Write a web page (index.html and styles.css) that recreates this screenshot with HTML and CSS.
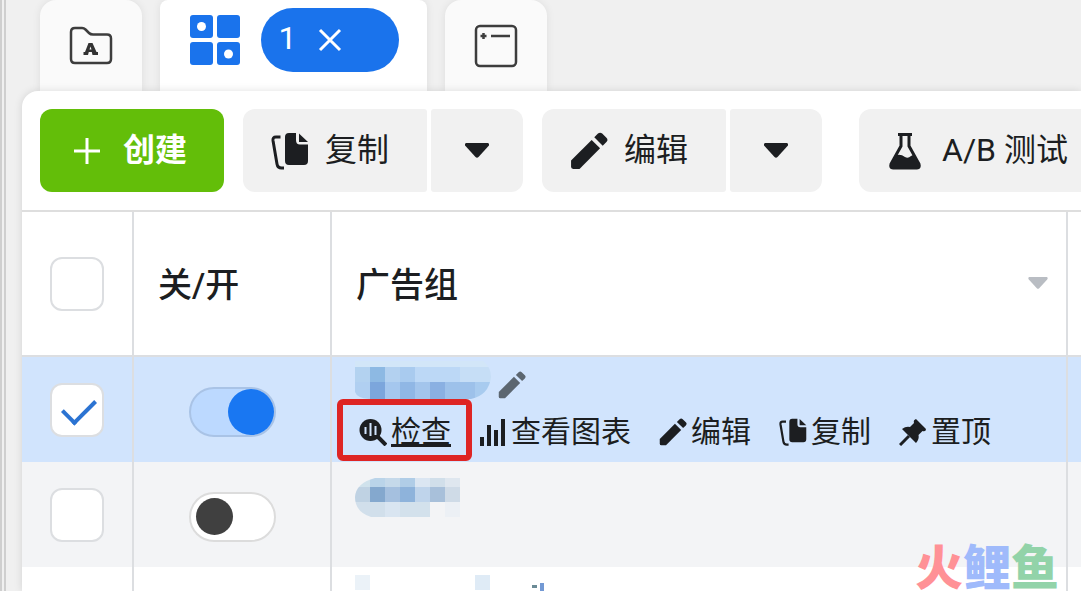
FILE: index.html
```html
<!DOCTYPE html>
<html lang="zh-CN">
<head>
    <meta charset="utf-8">
    <meta name="viewport" content="width=device-width, initial-scale=1">
    <title>广告组</title>
    <link rel="stylesheet" href="styles.css">
</head>
<body>
    <!-- shared icons -->
    <svg class="sprite" aria-hidden="true">
        <symbol id="i-copy" viewBox="0 0 38 38">
            <path d="M9.500 5 H5 Q1.500 5 2 8.500 L6 32 Q6.700 36 10.500 36 H13" fill="none" stroke="currentColor" stroke-width="3"/>
            <path d="M18 1 H25 V8 Q25 12.500 29 12.500 H37 V29 Q37 33 33 33 H18 Q14 33 14 29 V5 Q14 1 18 1 Z" fill="currentColor"/>
            <path d="M28 1.500 L37 10 H28 Z" fill="currentColor"/>
        </symbol>
        <symbol id="i-pencil" viewBox="0 0 36 36">
            <path d="M1 27 L20.500 7.500 L28.500 15.500 L9 35 H3 Q1 35 1 33 Z" fill="currentColor"/>
            <path d="M23 5 L26.500 1.500 Q28.500 0 30.500 1.500 L34.500 5.500 Q36.500 7.500 34.500 9.500 L31 13 Z" fill="currentColor"/>
        </symbol>
        <symbol id="i-caret" viewBox="0 0 24 15">
            <path d="M1 0 H23 Q25 1 23.500 3 L13.500 14 Q12 15.500 10.500 14 L.5 3 Q-1 1 1 0 Z" fill="currentColor"/>
        </symbol>
    </svg>

    <div class="app">
        <nav class="tabs">
            <button class="tab" type="button" aria-label="广告系列">
                <svg width="44" height="40" viewBox="0 0 44 40" fill="none">
                    <path d="M6 2 H13 Q15 2 16.500 3.500 L20 7 Q21.500 8.500 24 8.500 H38 Q42 8.500 42 12.500 V33 Q42 37 38 37 H6 Q2 37 2 33 V6 Q2 2 6 2 Z" stroke="#3d3d3d" stroke-width="2.500"/>
                    <path d="M19.500 17 H23.500 L27.500 26 H29 V29 H23.500 L22.800 26 H19.800 L19 29 H14.500 V26 H16 Z M20.500 23.500 H22.500 L21.500 20.500 Z" fill="#333" fill-rule="evenodd"/>
                </svg>
            </button>
            <div class="tab tab-active">
                <svg width="52" height="52" viewBox="0 0 52 52" fill="#1a73ec">
                    <rect x="1" y="1" width="23" height="23" rx="3"/>
                    <rect x="28" y="1" width="23" height="23" rx="3"/>
                    <rect x="1" y="28" width="23" height="23" rx="3"/>
                    <rect x="28" y="28" width="23" height="23" rx="3"/>
                    <circle cx="12.500" cy="12.500" r="4.500" fill="#fff"/>
                    <circle cx="39.500" cy="40" r="4.500" fill="#fff"/>
                </svg>
                <div class="chip">
                    <span class="count">1</span>
                    <button class="chip-close" type="button" aria-label="清除">
                        <svg width="24" height="24" viewBox="0 0 24 24"><path d="M2 2 L22 22 M22 2 L2 22" stroke="#fff" stroke-width="3"/></svg>
                    </button>
                </div>
            </div>
            <button class="tab" type="button" aria-label="广告">
                <svg width="44" height="44" viewBox="0 0 44 44" fill="none" stroke="#3d3d3d" stroke-width="2.500">
                    <rect x="2" y="2" width="40" height="40" rx="4"/>
                    <path d="M17 12 H36 M6.500 12 H12.500 M9.500 9 V15"/>
                </svg>
            </button>
        </nav>

        <main class="panel">
            <div class="toolbar">
                <button class="btn btn-create" type="button">
                    <svg width="28" height="28" viewBox="0 0 28 28"><path d="M14 1 V27 M1 14 H27" stroke="#fff" stroke-width="3"/></svg>
                    <span>创建</span>
                </button>
                <div class="split">
                    <button class="btn btn-main" type="button"><svg width="38" height="38"><use href="#i-copy"/></svg><span>复制</span></button>
                    <button class="btn btn-more" type="button" aria-label="更多复制选项"><svg width="24" height="15"><use href="#i-caret"/></svg></button>
                </div>
                <div class="split">
                    <button class="btn btn-main" type="button"><svg width="38" height="38"><use href="#i-pencil"/></svg><span>编辑</span></button>
                    <button class="btn btn-more" type="button" aria-label="更多编辑选项"><svg width="24" height="15"><use href="#i-caret"/></svg></button>
                </div>
                <button class="btn btn-test" type="button">
                    <svg width="34" height="38" viewBox="0 0 34 38">
                        <path d="M10 2.500 H24 M13 3 V14 L3 32 Q2 36 5 36 H29 Q32 36 31 32 L21 14 V3" fill="none" stroke="#1c1e21" stroke-width="3"/>
                        <path d="M9 23 Q13 22 17 25 Q20 27 23 24 L25 23 L32 32 Q33 37 29 37 H5 Q1 37 2 32 Z" fill="#1c1e21"/>
                    </svg>
                    <span>A/B 测试</span>
                </button>
            </div>

            <table class="grid">
                <colgroup>
                    <col class="col-check">
                    <col class="col-switch">
                    <col>
                    <col class="col-rest">
                </colgroup>
                <thead>
                    <tr>
                        <th class="center"><input class="check" type="checkbox" aria-label="全选"></th>
                        <th>关/开</th>
                        <th>
                            <div class="head-name">
                                广告组
                                <svg width="20" height="12"><use href="#i-caret"/></svg>
                            </div>
                        </th>
                        <th></th>
                    </tr>
                </thead>
                <tbody>
                    <tr class="selected">
                        <td class="center"><input class="check" type="checkbox" aria-label="选择广告组" checked></td>
                        <td class="center"><input class="switch" type="checkbox" role="switch" aria-label="投放开关" checked></td>
                        <td class="name-cell">
                            <div class="name">
                                <svg width="136" height="38" viewBox="0 0 136 38">
                                    <clipPath id="m1"><path d="M0 0 H128 Q136 6 136 16 Q134 34 116 38 H14 Q2 37 0 31 Z"/></clipPath>
                                    <g clip-path="url(#m1)">
                                        <rect width="136" height="6" fill="#d2e6f8"/>
                                        <rect y="6" width="15" height="15" fill="#b3d2f0"/>
                                        <rect x="15" y="6" width="15" height="15" fill="#8db9e3"/>
                                        <rect x="30" y="6" width="15" height="15" fill="#b3d1f0"/>
                                        <rect x="45" y="6" width="15" height="15" fill="#a9cbef"/>
                                        <rect x="60" y="6" width="45" height="15" fill="#bcd8f6"/>
                                        <rect x="105" y="6" width="31" height="15" fill="#c6def6"/>
                                        <rect y="21" width="15" height="17" fill="#b0cff1"/>
                                        <rect x="15" y="21" width="15" height="17" fill="#7ca6dc"/>
                                        <rect x="30" y="21" width="15" height="17" fill="#a5c7ee"/>
                                        <rect x="45" y="21" width="15" height="17" fill="#90b7e5"/>
                                        <rect x="60" y="21" width="15" height="17" fill="#a3c5ec"/>
                                        <rect x="75" y="21" width="15" height="17" fill="#8ab0e2"/>
                                        <rect x="90" y="21" width="30" height="17" fill="#9dc1ea"/>
                                        <rect x="120" y="21" width="16" height="17" fill="#a8cbef"/>
                                    </g>
                                </svg>
                                <button class="rename" type="button" aria-label="重命名"><svg width="28" height="28"><use href="#i-pencil"/></svg></button>
                            </div>
                            <div class="actions">
                                <a class="marked" href="#"><svg width="28" height="28" viewBox="0 0 28 28">
                                    <circle cx="11.500" cy="12" r="11" fill="#1c1e21"/>
                                    <path d="M19 19 L27 27" stroke="#1c1e21" stroke-width="4"/>
                                    <path d="M6.500 9 V16 M11.500 5 V18 M16.500 8 V17" stroke="#d1e4fd" stroke-width="2"/>
                                </svg>检查</a>
                                <a href="#"><svg width="28" height="28" viewBox="0 0 28 28">
                                    <path d="M3 19 V28 M10 7 V28 M17 12 V28 M24 1 V28" stroke="#1c1e21" stroke-width="4"/>
                                </svg>查看图表</a>
                                <a href="#"><svg width="28" height="28"><use href="#i-pencil"/></svg>编辑</a>
                                <a href="#"><svg width="28" height="28"><use href="#i-copy"/></svg>复制</a>
                                <a href="#"><svg width="28" height="28" viewBox="0 0 28 28">
                                    <path d="M17 1 L27 11 Q27 14 23.500 13 L19.500 17 Q20.500 21 17 25 L3 11 Q7 8 11 9 L15 5 Q14 2 17 1 Z" fill="#1c1e21"/>
                                    <path d="M10 18 L1 27" stroke="#1c1e21" stroke-width="3"/>
                                </svg>置顶</a>
                            </div>
                        </td>
                        <td></td>
                    </tr>
                    <tr class="striped">
                        <td class="center"><input class="check" type="checkbox" aria-label="选择广告组"></td>
                        <td class="center"><input class="switch" type="checkbox" role="switch" aria-label="投放开关"></td>
                        <td class="name-cell">
                            <svg width="106" height="52" viewBox="0 0 106 52">
                                <clipPath id="m2"><path d="M20 12 H105 V51 H16 Q0 46 0 31 Q1 17 20 12 Z"/></clipPath>
                                <g clip-path="url(#m2)">
                                    <rect y="12" width="15" height="9" fill="#d0e2ec"/>
                                    <rect x="15" y="12" width="15" height="9" fill="#bad4e9"/>
                                    <rect x="30" y="12" width="15" height="9" fill="#c5d9ea"/>
                                    <rect x="45" y="12" width="15" height="9" fill="#b0cde7"/>
                                    <rect x="60" y="12" width="15" height="9" fill="#dbe6f2"/>
                                    <rect x="75" y="12" width="15" height="9" fill="#d1dfea"/>
                                    <rect x="90" y="12" width="15" height="9" fill="#dfe7ef"/>
                                    <rect y="21" width="15" height="15" fill="#bfd2e3"/>
                                    <rect x="15" y="21" width="15" height="15" fill="#84a8ce"/>
                                    <rect x="30" y="21" width="15" height="15" fill="#a5c0df"/>
                                    <rect x="45" y="21" width="15" height="15" fill="#8eb3db"/>
                                    <rect x="60" y="21" width="15" height="15" fill="#bfd4eb"/>
                                    <rect x="75" y="21" width="15" height="15" fill="#a8c0da"/>
                                    <rect x="90" y="21" width="15" height="15" fill="#cfdbe7"/>
                                    <rect y="36" width="30" height="15" fill="#d1dfeb"/>
                                    <rect x="30" y="36" width="15" height="15" fill="#d9e5f1"/>
                                    <rect x="45" y="36" width="30" height="15" fill="#d3e1ec"/>
                                    <rect x="90" y="36" width="15" height="15" fill="#ecf0f5"/>
                                </g>
                            </svg>
                        </td>
                        <td></td>
                    </tr>
                    <tr>
                        <td></td>
                        <td></td>
                        <td class="name-cell">
                            <svg width="192" height="38" viewBox="0 0 192 38">
                                <rect y="4" width="15" height="15" fill="#ebf2f8"/>
                                <rect x="120" y="4" width="15" height="15" fill="#dfebf6"/>
                                <rect x="177" y="14" width="5" height="3" fill="#6b8b96"/>
                                <rect x="185" y="12" width="4" height="24" fill="#7399d4"/>
                            </svg>
                        </td>
                        <td></td>
                    </tr>
                </tbody>
            </table>
        </main>

        <div class="watermark"><span class="red">火</span><span class="blue">鲤</span><span class="green">鱼</span></div>
    </div>
</body>
</html>
```
FILE: styles.css
```css
* {
    box-sizing: border-box;
}
body {
    margin: 0;
    font-family: Roboto, "Noto Sans CJK SC", sans-serif;
    color: #1c1e21;
    background: #f0f0f0;
}
svg {
    display: block;
    flex: none;
}
button {
    font: inherit;
    color: inherit;
    border: 0;
    padding: 0;
    background: none;
    cursor: pointer;
}
.sprite {
    position: absolute;
    width: 0;
    height: 0;
}
.app {
    position: relative;
    height: 100vh;
    overflow: hidden;
    padding-left: 16px;
    border-left: 6px double #cfcfcf;
}

/* tabs */
.tabs {
    display: flex;
    gap: 18px;
    height: 91px;
    padding-left: 18px;
}
.tab {
    display: flex;
    align-items: center;
    justify-content: center;
    width: 102px;
    background: #fafafa;
    border-radius: 16px 16px 0 0;
    box-shadow: 0 0 8px rgba(0, 0, 0, .08);
}
.tab-active {
    width: 267px;
    gap: 20px;
    padding-bottom: 11px;
    background: #fff;
    border-radius: 8px 8px 0 0;
}
.chip {
    display: flex;
    align-items: center;
    gap: 22px;
    width: 138px;
    height: 64px;
    padding-left: 18px;
    border-radius: 32px;
    background: #1a73ec;
    color: #fff;
    font-size: 32px;
}
.count {
    padding-bottom: 4px;
}

/* panel */
.panel {
    position: relative;
    height: calc(100vh - 91px);
    overflow: hidden;
    background: #fff;
    border-radius: 16px 0 0 0;
    box-shadow: 0 0 8px rgba(0, 0, 0, .12);
}
.toolbar {
    display: flex;
    gap: 19px;
    padding: 18px 0 18px 18px;
    border-bottom: 2px solid #dedede;
}
.btn {
    display: flex;
    flex: none;
    align-items: center;
    height: 83px;
    border-radius: 12px;
    background: #f1f1f1;
    font-size: 32px;
    white-space: nowrap;
}
.btn span {
    padding-bottom: 8px;
}
.btn-create {
    gap: 22px;
    width: 184px;
    padding-left: 33px;
    background: #63be09;
    color: #fff;
    font-weight: 700;
}
.split {
    display: flex;
    flex: none;
    gap: 4px;
}
.btn-main {
    gap: 16px;
    width: 184px;
    padding-left: 28px;
    border-radius: 12px 3px 3px 12px;
}
.btn-more {
    justify-content: center;
    width: 92px;
    border-radius: 3px 12px 12px 3px;
}
.btn-test {
    gap: 20px;
    width: 260px;
    margin-left: 18px;
    padding-left: 29px;
}

/* table */
.grid {
    width: 100%;
    table-layout: fixed;
    border-spacing: 0;
}
.col-check {
    width: 112px;
}
.col-switch {
    width: 198px;
}
.col-rest {
    width: 13px;
}
.grid th,
.grid td {
    padding: 0;
    border-right: 2px solid #dcdee1;
}
.grid th:last-child,
.grid td:last-child {
    border-right: 0;
}
.grid th {
    height: 145px;
    padding: 0 0 2px 24px;
    border-bottom: 2px solid #dcdee1;
    font-size: 34px;
    font-weight: 500;
    text-align: left;
}
.grid td {
    height: 105px;
}
.grid .center {
    padding: 0;
    text-align: center;
}
.head-name {
    display: flex;
    align-items: center;
    justify-content: space-between;
    padding-right: 18px;
}
.head-name svg {
    color: #b9bdc3;
}
.selected {
    background: #d1e4fd;
}
.striped {
    background: #f3f4f6;
}

.check {
    appearance: none;
    display: inline-block;
    width: 54px;
    height: 54px;
    margin: 0;
    vertical-align: middle;
    border: 2px solid #dcdee1;
    border-radius: 12px;
    background: #fff;
}
.check:checked::before {
    content: "";
    display: block;
    width: 28px;
    height: 15px;
    margin: 13px 0 0 11px;
    border-left: 4px solid #2b73d2;
    border-bottom: 4px solid #2b73d2;
    transform: rotate(-45deg);
}
.switch {
    appearance: none;
    display: inline-flex;
    align-items: center;
    width: 87px;
    height: 50px;
    margin: 4px 0 0;
    padding: 0 5px;
    vertical-align: middle;
    border: 2px solid #dcdcdc;
    border-radius: 25px;
    background: #fff;
}
.switch::before {
    content: "";
    width: 37px;
    height: 37px;
    border-radius: 50%;
    background: #404040;
}
.switch:checked {
    justify-content: flex-end;
    padding: 0;
    border-color: #a9c3e6;
    background: #bcd9ff;
}
.switch:checked::before {
    width: 46px;
    height: 46px;
    background: #1977f2;
}

.grid .name-cell {
    padding: 4px 0 0 23px;
    vertical-align: top;
}
.name {
    display: flex;
    align-items: center;
    gap: 7px;
}
.rename {
    padding-top: 10px;
    color: #5c6670;
}
.actions {
    display: flex;
    gap: 28px;
    padding: 13px 0 0 4px;
}
.actions a {
    display: flex;
    align-items: center;
    gap: 4px;
    position: relative;
    color: #1c1e21;
    font-size: 30px;
    line-height: 40px;
    white-space: nowrap;
    text-decoration: none;
}
.actions .marked {
    text-decoration: underline;
}
.marked::after {
    content: "";
    position: absolute;
    inset: -13px -21px -9px -22px;
    border: 6px solid #de2524;
    border-radius: 6px;
}

.watermark {
    position: absolute;
    right: 22px;
    bottom: 0;
    font-size: 48px;
    line-height: 44px;
    font-weight: 900;
}
.red {
    color: #ff9196;
}
.blue {
    color: #9fbafb;
}
.green {
    color: #92d3a9;
}
```
